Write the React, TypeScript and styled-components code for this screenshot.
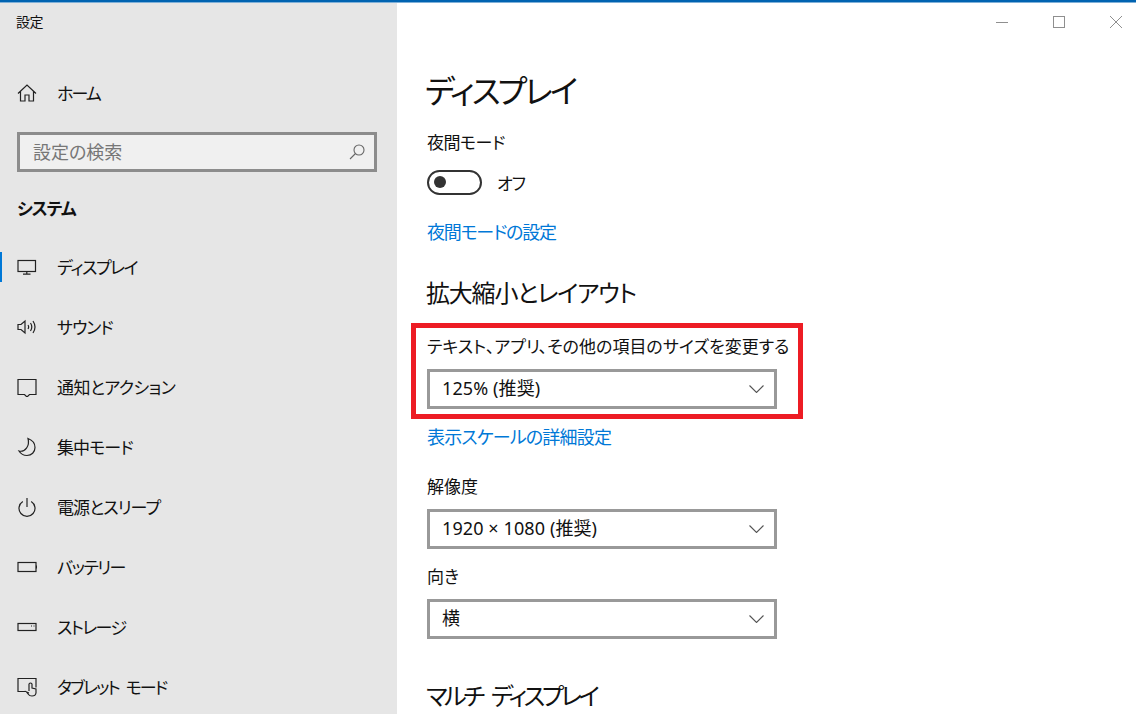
import React from "react";
import styled, { createGlobalStyle } from "styled-components";

const GlobalStyle = createGlobalStyle`
  html, body {
    margin: 0;
    padding: 0;
    height: 100%;
    overflow: hidden;
    background: #fff;
  }
  body {
    font-family: "Noto Sans CJK JP", "Noto Sans", sans-serif;
    font-feature-settings: "palt";
    color: #111;
    white-space: nowrap;
  }
`;

const Window = styled.div`
  width: 1136px;
  height: 714px;
  display: flex;
  flex-direction: column;
  overflow: hidden;
`;

const TopBar = styled.div`
  height: 3px;
  flex: none;
  background: #0063b1;
  border-bottom: 1px solid #7fb0d8;
  box-sizing: border-box;
`;

const Columns = styled.div`
  flex: 1;
  min-height: 0;
  display: flex;
`;

const Sidebar = styled.aside`
  width: 397px;
  flex: none;
  background: #e6e6e6;
  display: flex;
  flex-direction: column;
  overflow: hidden;
`;

const AppTitle = styled.div`
  flex: none;
  height: 38px;
  line-height: 36px;
  padding-left: 16px;
  font-size: 14px;
  letter-spacing: -0.4px;
  margin-bottom: 22px;
`;

const NavRow = styled.div<{ $active?: boolean }>`
  position: relative;
  height: 60px;
  flex: none;
  display: flex;
  align-items: center;
  padding-left: 17px;
  gap: 20px;
  &::before {
    content: "";
    display: ${(p) => (p.$active ? "block" : "none")};
    position: absolute;
    left: 0;
    top: 15px;
    width: 2px;
    height: 30px;
    background: #0078d7;
  }
`;

const NavLabel = styled.span<{ $tracking: number; $wordGap?: number }>`
  font-size: 17px;
  margin-bottom: 2px;
  letter-spacing: ${(p) => p.$tracking}px;
  word-spacing: ${(p) => p.$wordGap ?? 0}px;
`;

const NavIcon = styled.svg`
  width: 20px;
  height: 20px;
  flex: none;
  fill: none;
  stroke: #222;
  stroke-width: 1.2;
`;

const SearchBox = styled.div`
  flex: none;
  margin: 9px 20px 25px 17px;
  height: 40px;
  box-sizing: border-box;
  border: 3px solid #8c8c8c;
  background: #f0f0f0;
  display: flex;
  align-items: center;
  justify-content: space-between;
  padding: 0 9px 2px 13px;
  font-size: 18px;
  color: #777;
`;

const SearchIcon = styled.svg`
  width: 16px;
  height: 16px;
  margin-top: 2px;
  fill: none;
  stroke: #666;
  stroke-width: 1.1;
`;

const GroupTitle = styled.div`
  flex: none;
  height: 24px;
  line-height: 22px;
  padding-left: 17px;
  font-size: 17px;
  font-weight: 700;
  letter-spacing: -1px;
  margin-bottom: 16px;
`;

const Main = styled.main`
  flex: 1;
  min-width: 0;
  padding-left: 30px;
  display: flex;
  flex-direction: column;
  align-items: flex-start;
  overflow: hidden;
`;

const WindowControls = styled.div`
  align-self: stretch;
  height: 38px;
  flex: none;
  display: flex;
  justify-content: flex-end;
  align-items: center;
  gap: 45px;
  padding-right: 14px;
`;

const ControlIcon = styled.svg`
  width: 12px;
  height: 12px;
  fill: none;
  stroke: #8f8f8f;
  stroke-width: 1;
`;

const PageTitle = styled.h1`
  flex: none;
  margin: 25px 0 17px -2px;
  height: 48px;
  line-height: 46px;
  font-size: 32px;
  letter-spacing: -2.8px;
  font-weight: 400;
`;

const SectionTitle = styled.h2<{ $top: number; $tracking: number; $wordGap?: number }>`
  margin: ${(p) => p.$top}px 0 0 -1px;
  height: 36px;
  line-height: 34px;
  font-size: 24px;
  letter-spacing: ${(p) => p.$tracking}px;
  word-spacing: ${(p) => p.$wordGap ?? 0}px;
  font-weight: 400;
  flex: none;
`;

const Label = styled.div<{ $top?: number; $tracking?: number }>`
  margin-top: ${(p) => p.$top ?? 0}px;
  height: 24px;
  line-height: 22px;
  font-size: 17px;
  letter-spacing: ${(p) => p.$tracking ?? 0}px;
  flex: none;
`;

const ToggleRow = styled.div`
  margin-top: 15px;
  height: 24px;
  display: flex;
  align-items: center;
  gap: 15px;
  font-size: 17px;
  letter-spacing: -1px;
  flex: none;
`;

const ToggleTrack = styled.div`
  width: 55px;
  height: 25px;
  box-sizing: border-box;
  border: 2.5px solid #333;
  border-radius: 13px;
  display: flex;
  align-items: center;
  padding-left: 5px;
`;

const ToggleKnob = styled.div`
  width: 12px;
  height: 12px;
  border-radius: 50%;
  background: #333;
`;

const TextLink = styled.a<{ $top: number; $tracking: number }>`
  display: block;
  margin-top: ${(p) => p.$top}px;
  height: 24px;
  line-height: 22px;
  font-size: 18px;
  letter-spacing: ${(p) => p.$tracking}px;
  color: #0078d7;
  flex: none;
`;

const Highlight = styled.div`
  margin: 12px 0 0 -16px;
  width: 392px;
  height: 96px;
  box-sizing: border-box;
  border: 5px solid #ed1c24;
  padding: 7px 0 5px 11px;
  flex: none;
`;

const Select = styled.div<{ $top: number }>`
  margin-top: ${(p) => p.$top}px;
  width: 350px;
  height: 40px;
  flex: none;
  box-sizing: border-box;
  border: 3px solid #999;
  background: #fff;
  display: flex;
  align-items: center;
  justify-content: space-between;
  padding: 0 10px 4px 12px;
  font-family: "Noto Sans", "Noto Sans CJK JP", sans-serif;
  font-size: 18px;
  letter-spacing: 0.1px;
`;

const Chevron = styled.svg`
  width: 15px;
  height: 8px;
  margin-top: 4px;
  fill: none;
  stroke: #555;
  stroke-width: 1.1;
`;

const navItems: {
  label: string;
  tracking: number;
  wordGap?: number;
  active?: boolean;
  icon: React.ReactNode;
}[] = [
  {
    label: "ディスプレイ",
    tracking: -1.4,
    active: true,
    icon: (
      <>
        <rect x="1" y="3.5" width="17.5" height="11" />
        <path d="M9.8 14.5v2.5M6 17.2h7.5" />
      </>
    ),
  },
  {
    label: "サウンド",
    tracking: -1.05,
    icon: (
      <>
        <path d="M1 7.5h3l4-3.5v12l-4-3.5H1z" />
        <path d="M11 8q1.3 2 0 4M13.5 6q2.6 4 0 8M16 4q4 6 0 12" />
      </>
    ),
  },
  {
    label: "通知とアクション",
    tracking: -0.55,
    icon: <path d="M1 2.5h18v15h-6.5L10 20l-2.5-2.5H1z" />,
  },
  {
    label: "集中モード",
    tracking: -0.9,
    icon: (
      <path d="M11 1.5c4 1.500 7 4.500 7 9 0 4.800-3.500 8-8 8-3.500 0-6.500-2-8-4.500 6 1.500 11-5 9-12.500z" />
    ),
  },
  {
    label: "電源とスリープ",
    tracking: -0.9,
    icon: (
      <>
        <path d="M10 1v9" />
        <path d="M5.800 4.500a8 8 0 1 0 8.400 0" />
      </>
    ),
  },
  {
    label: "バッテリー",
    tracking: -1.55,
    icon: (
      <>
        <rect x="1" y="5.500" width="18" height="9" />
        <path d="M19.500 8.500v3" />
      </>
    ),
  },
  {
    label: "ストレージ",
    tracking: -1.55,
    icon: (
      <>
        <rect x="1" y="6.500" width="18" height="7" />
        <path d="M14 9h1M16.500 9h1" />
      </>
    ),
  },
  {
    label: "タブレット モード",
    tracking: -1.9,
    wordGap: 5,
    icon: (
      <>
        <path d="M9 14.500H1V1.500h18v9" />
        <path d="M12 14V7q1.500-2 3 0v4l4 1v4q-.5 3-4 3-2.500 0-3.500-1.500L9.500 15l2.500 1" />
      </>
    ),
  },
];

const Arrow = () => (
  <Chevron viewBox="0 0 15 8">
    <path d="M0.500 0.500L7.500 7.500l7-7" />
  </Chevron>
);

export default function App() {
  return (
    <Window>
      <GlobalStyle />
      <TopBar />
      <Columns>
        <Sidebar>
          <AppTitle>設定</AppTitle>
          <NavRow>
            <NavIcon viewBox="0 0 20 20">
              <path d="M1 10.500L10 2l9 8.500M3.500 8.500V18h4.500v-6h4v6h4.500V8.500" />
            </NavIcon>
            <NavLabel $tracking={-1.9}>ホーム</NavLabel>
          </NavRow>
          <SearchBox>
            設定の検索
            <SearchIcon viewBox="0 0 16 16">
              <circle cx="10" cy="6" r="5" />
              <path d="M6.500 9.500L1 15" />
            </SearchIcon>
          </SearchBox>
          <GroupTitle>システム</GroupTitle>
          {navItems.map((item) => (
            <NavRow key={item.label} $active={item.active}>
              <NavIcon viewBox="0 0 20 20">{item.icon}</NavIcon>
              <NavLabel $tracking={item.tracking} $wordGap={item.wordGap}>
                {item.label}
              </NavLabel>
            </NavRow>
          ))}
        </Sidebar>
        <Main>
          <WindowControls>
            <ControlIcon viewBox="0 0 12 12">
              <path d="M0 6.500h12" />
            </ControlIcon>
            <ControlIcon viewBox="0 0 12 12">
              <rect x="0.500" y="0.500" width="11" height="11" />
            </ControlIcon>
            <ControlIcon viewBox="0 0 12 12">
              <path d="M0 0l12 12M12 0L0 12" />
            </ControlIcon>
          </WindowControls>
          <PageTitle>ディスプレイ</PageTitle>
          <Label $tracking={-0.5}>夜間モード</Label>
          <ToggleRow>
            <ToggleTrack>
              <ToggleKnob />
            </ToggleTrack>
            オフ
          </ToggleRow>
          <TextLink $top={26} $tracking={-1.2}>
            夜間モードの設定
          </TextLink>
          <SectionTitle $top={31} $tracking={-1.2}>
            拡大縮小とレイアウト
          </SectionTitle>
          <Highlight>
            <Label>テキスト、アプリ、その他の項目のサイズを変更する</Label>
            <Select $top={10}>
              125% (推奨)
              <Arrow />
            </Select>
          </Highlight>
          <TextLink $top={6} $tracking={-0.8}>
            表示スケールの詳細設定
          </TextLink>
          <Label $top={26}>解像度</Label>
          <Select $top={10}>
            1920 × 1080 (推奨)
            <Arrow />
          </Select>
          <Label $top={16}>向き</Label>
          <Select $top={10}>
            横
            <Arrow />
          </Select>
          <SectionTitle $top={39} $tracking={-3.3} $wordGap={7}>
            マルチ ディスプレイ
          </SectionTitle>
        </Main>
      </Columns>
    </Window>
  );
}
